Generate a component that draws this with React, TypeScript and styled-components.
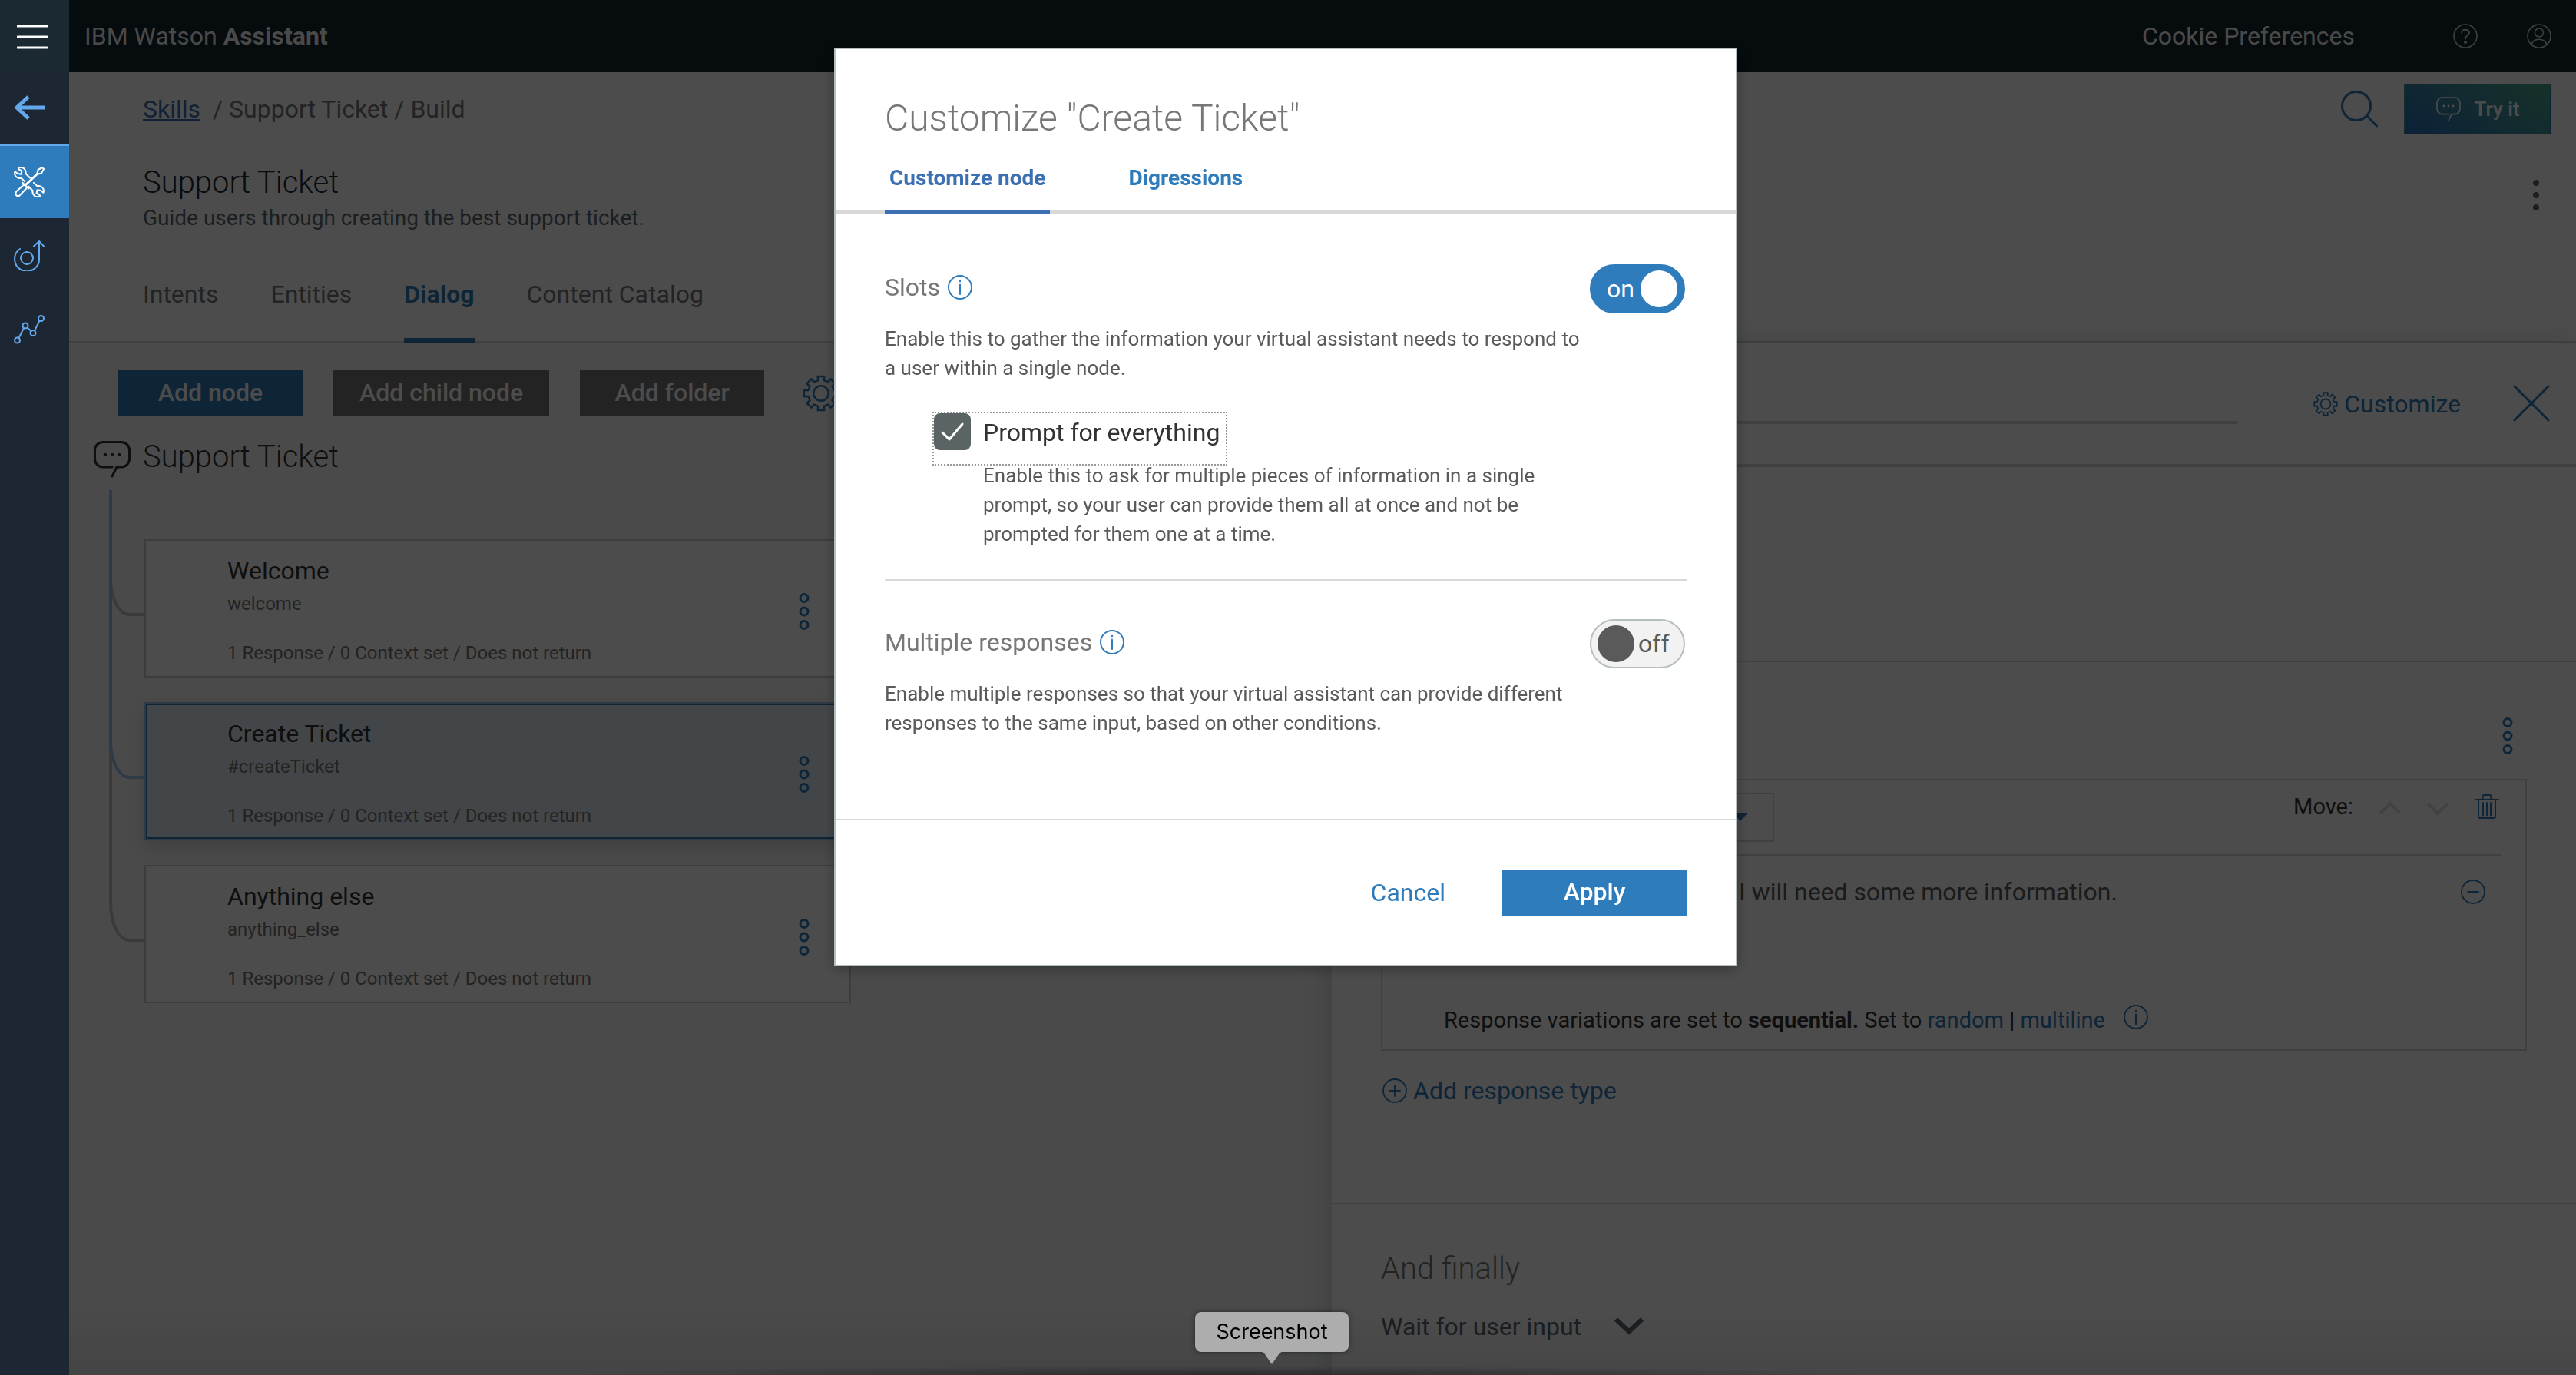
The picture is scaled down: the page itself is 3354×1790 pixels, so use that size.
import React, { useState } from 'react';
import styled, { createGlobalStyle, css } from 'styled-components';

const color = {
  blue: '#2f7cbc',
  indigo: '#3d70b2',
  line: '#d8d8d8',
  text: '#323232',
  mid: '#5a5a5a',
  soft: '#777777',
  slate: '#5a6872',
  sky: '#64a8ec',
};

const GlobalStyle = createGlobalStyle`
  *, *::before, *::after { box-sizing: border-box; }
  body {
    margin: 0;
    background: #fff;
    color: ${color.text};
    font-family: Roboto, "Liberation Sans", sans-serif;
    font-size: 32px;
    line-height: 40px;
  }
  h1, h2, h3, p, ul { margin: 0; padding: 0; font-size: inherit; font-weight: 400; }
  ul { list-style: none; }
  button, input, select { font: inherit; color: inherit; }
  svg { display: block; flex: none; }
`;

const plainButton = css`
  margin: 0;
  padding: 0;
  border: 0;
  background: none;
  cursor: pointer;
`;

/* ---------- icons ---------- */

const Svg = styled.svg<{ $w?: number; $sharp?: boolean }>`
  fill: none;
  stroke: currentColor;
  stroke-width: ${p => p.$w ?? 2};
  stroke-linecap: ${p => (p.$sharp ? 'butt' : 'round')};
  stroke-linejoin: ${p => (p.$sharp ? 'miter' : 'round')};
`;

const MenuIcon = () => (
  <Svg width="40" height="32" viewBox="0 0 40 32" $w={3}>
    <path d="M1 2H39M1 16H39M1 30H39" />
  </Svg>
);

const BackIcon = () => (
  <Svg width="40" height="32" viewBox="0 0 40 32" $w={5} $sharp>
    <path d="M3 16H40M19 2L4 16L19 30" />
  </Svg>
);

const wrenchHead = 'M6 1.4C11.5 -.4 16.500 3 15.500 9L21 14.500M6 1.400L6.500 3.500L10.500 5.500L9.500 9.800L5 9L1.500 6.200C-.2 11.500 4 16 9.500 14.800L14 19';

const ToolsIcon = () => (
  <Svg width="40" height="40" viewBox="0 0 40 40" $w={2}>
    <path d={wrenchHead} />
    <path d={wrenchHead} transform="rotate(180 20 20)" />
    <path d="M15.500 23.500L31 9" strokeWidth="3" />
    <path d="M30.500 8L31.500 4L37 1L39 3L36 8.500L32 9.500Z" />
    <path d="M11 20.500L19.500 28.500M13.500 23L3.500 32Q1.500 34.500 3 37Q5.500 39.500 8 37L17.500 27" />
  </Svg>
);

const ImproveIcon = () => (
  <Svg width="40" height="40" viewBox="0 0 40 40" $w={2}>
    <path d="M8 11A16 16 0 1 0 33 23V2M26 7.500L33 1L39 7.500" />
    <circle cx="17" cy="23" r="8" />
  </Svg>
);

const AnalyticsIcon = () => (
  <Svg width="40" height="40" viewBox="0 0 40 40" $w={2}>
    <circle cx="4.500" cy="34" r="3.500" />
    <circle cx="15" cy="15" r="3.500" />
    <circle cx="25" cy="24.500" r="3.500" />
    <circle cx="35.500" cy="5.500" r="3.500" />
    <path d="M6.500 31L13 18M17.500 17.500L22.500 22M27 21.500L33.500 8.500" />
  </Svg>
);

const HelpIcon = () => (
  <Svg width="32" height="32" viewBox="0 0 32 32" $w={1.6}>
    <circle cx="16" cy="16" r="15" />
    <path d="M11 11.500C11 6.500 21 6.500 21 11.500C21 15.500 16 14.500 16 19.500" strokeWidth="2" />
    <circle cx="16" cy="24" r="1.300" fill="currentColor" />
  </Svg>
);

const UserIcon = () => (
  <Svg width="32" height="32" viewBox="0 0 32 32" $w={1.6}>
    <circle cx="16" cy="16" r="15" />
    <circle cx="16" cy="11.500" r="5.500" />
    <path d="M6.500 27C7 18 25 18 25.500 27" />
  </Svg>
);

const SearchIcon = () => (
  <Svg width="48" height="48" viewBox="0 0 48 48" $w={3}>
    <circle cx="20" cy="20" r="18.500" />
    <path d="M34 33L46.500 46" />
  </Svg>
);

const ChatIcon = ({ size }: { size: number }) => (
  <Svg width={size} height={size} viewBox="0 0 48 48" $w={size > 40 ? 3 : 2.4}>
    <path d="M24 34H12A10.500 10.500 0 0 1 1.500 23.500V12A10.500 10.500 0 0 1 12 1.500H36A10.500 10.500 0 0 1 46.500 12V23.500A10.500 10.500 0 0 1 36 34H30L24 46" />
    <g fill="currentColor" stroke="none">
      <circle cx="15" cy="18" r="2.200" />
      <circle cx="24" cy="18" r="2.200" />
      <circle cx="33" cy="18" r="2.200" />
    </g>
  </Svg>
);

const gearOutline = (() => {
  const teeth = 8;
  const points: string[] = [];
  for (let i = 0; i < teeth; i++) {
    const a = (i * 2 * Math.PI) / teeth;
    [[11.5, -0.22], [15, -0.19], [15, 0.19], [11.5, 0.22]].forEach(([r, d]) => {
      points.push(`${(r * Math.sin(a + d)).toFixed(2)} ${(-r * Math.cos(a + d)).toFixed(2)}`);
    });
  }
  return `M${points.join('L')}Z`;
})();

const GearIcon = ({ size }: { size: number }) => (
  <Svg width={size} height={size} viewBox="-16 -16 32 32" $w={size > 40 ? 1.7 : 1.8}>
    <path d={gearOutline} />
    <circle r="6.500" />
  </Svg>
);

const CloseIcon = () => (
  <Svg width="48" height="48" viewBox="0 0 48 48" $w={3}>
    <path d="M2 2L46 46M46 2L2 46" />
  </Svg>
);

const InfoIcon = () => (
  <Svg width="32" height="32" viewBox="0 0 32 32" $w={2}>
    <circle cx="16" cy="16" r="15" />
    <path d="M16 12.500V25" />
    <circle cx="16" cy="8" r="1.200" fill="currentColor" stroke="none" />
  </Svg>
);

const PlusCircleIcon = () => (
  <Svg width="32" height="32" viewBox="0 0 32 32" $w={1.8}>
    <circle cx="16" cy="16" r="15" />
    <path d="M16 9V23M9 16H23" />
  </Svg>
);

const MinusCircleIcon = () => (
  <Svg width="32" height="32" viewBox="0 0 32 32" $w={1.8}>
    <circle cx="16" cy="16" r="15" />
    <path d="M9 16H23" />
  </Svg>
);

const ChevronIcon = ({ up }: { up?: boolean }) => (
  <Svg width="28" height="32" viewBox="0 0 28 32" $w={4} $sharp>
    <path d={up ? 'M1 25L14 12L27 25' : 'M1 12L14 25L27 12'} />
  </Svg>
);

const BigChevronIcon = () => (
  <Svg width="38" height="24" viewBox="0 0 38 24" $w={6} $sharp>
    <path d="M2 2.500L19 18.500L36 2.500" />
  </Svg>
);

const TrashIcon = () => (
  <Svg width="32" height="32" viewBox="0 0 32 32" $w={2}>
    <path d="M1 7H31M10.500 7V3Q10.500 1 12.500 1H19.500Q21.500 1 21.500 3V7M5 7V29Q5 31 7 31H25Q27 31 27 29V7M11 11V27.500M16 11V27.500M21 11V27.500" />
  </Svg>
);

const RingsIcon = () => (
  <Svg width="14" height="48" viewBox="0 0 14 48" $w={3}>
    <circle cx="7" cy="6.500" r="5" />
    <circle cx="7" cy="24" r="5" />
    <circle cx="7" cy="41.500" r="5" />
  </Svg>
);

const DotsIcon = () => (
  <svg width="40" height="40" viewBox="0 0 40 40" fill="currentColor">
    <circle cx="20" cy="4" r="4" />
    <circle cx="20" cy="20" r="4" />
    <circle cx="20" cy="36" r="4" />
  </svg>
);

/* ---------- shell ---------- */

const Page = styled.div`
  display: flex;
  min-height: 100vh;
`;

const Rail = styled.nav`
  position: relative;
  z-index: 20;
  display: flex;
  flex-direction: column;
  flex: none;
  width: 90px;
  background: #1d2733;
`;

const RailButton = styled.button<{ $kind?: 'menu' | 'back' | 'active' }>`
  ${plainButton}
  display: flex;
  align-items: center;
  height: 96px;
  padding-left: 18px;
  border-top: 2px solid transparent;
  color: ${color.sky};
  ${p => p.$kind === 'menu' && css`
    height: 94px;
    padding-left: 22px;
    background: #1b2932;
    color: #fff;
  `}
  ${p => p.$kind === 'back' && css`
    height: 94px;
    border-top: 0;
    padding-bottom: 2px;
  `}
  ${p => p.$kind === 'active' && css`
    border-top-color: ${color.sky};
    background: ${color.blue};
    color: #fff;
  `}
`;

const Main = styled.main`
  display: flex;
  flex-direction: column;
  flex: 1;
  min-width: 0;
`;

const TopBar = styled.header`
  display: flex;
  align-items: center;
  height: 94px;
  padding: 0 32px 0 20px;
  background: #14252f;
  color: #f5f5f5;
`;

const Brand = styled.p`
  flex: 1;
`;

const TopLink = styled.a`
  margin-right: 128px;
  color: inherit;
  text-decoration: none;
`;

const TopIcon = styled.button`
  ${plainButton}
  color: #d0d0d0;
  & + & { margin-left: 64px; }
`;

/* ---------- skill header ---------- */

const SkillHeader = styled.section`
  padding: 16px 32px 0 96px;
  background: #fff;
  box-shadow: inset 0 -2px ${color.line};
`;

const SkillRow = styled.div`
  display: flex;
  align-items: center;
  justify-content: space-between;
`;

const Crumbs = styled.p`
  color: ${color.soft};
  white-space: pre;
  a { color: ${color.indigo}; }
`;

const Actions = styled.div`
  display: flex;
  align-items: center;
  gap: 34px;
`;

const IconButton = styled.button<{ $tone?: string }>`
  ${plainButton}
  color: ${p => p.$tone ?? color.blue};
`;

const TryButton = styled.button`
  ${plainButton}
  display: flex;
  align-items: center;
  justify-content: center;
  gap: 18px;
  width: 192px;
  height: 64px;
  border: solid transparent;
  border-width: 0 2px;
  background: linear-gradient(35deg, #2b6cbd, #3c8ca0 50%, #4ba488);
  color: #fff;
  font-size: 26px;
  font-weight: 500;
  line-height: 32px;
`;

const TitleRow = styled.div`
  display: flex;
  align-items: flex-start;
  justify-content: space-between;
  margin-top: 40px;
  ${IconButton} { padding: 20px 0; }
`;

const SkillTitle = styled.h1`
  color: #152934;
  font-size: 40px;
  font-weight: 300;
  line-height: 48px;
`;

const SkillNote = styled.p`
  margin-top: 4px;
  color: ${color.slate};
  font-size: 28px;
  line-height: 36px;
`;

const Tabs = styled.nav`
  display: flex;
  gap: 68px;
  margin-top: 61px;
`;

const Tab = styled.a<{ $on?: boolean }>`
  padding-bottom: 37px;
  border-bottom: 6px solid ${p => (p.$on ? color.blue : 'transparent')};
  color: ${p => (p.$on ? color.blue : color.soft)};
  font-weight: ${p => (p.$on ? 700 : 400)};
  text-decoration: none;
`;

/* ---------- tree ---------- */

const Workspace = styled.div`
  display: flex;
  flex: 1;
`;

const TreePanel = styled.section`
  flex: 1;
  min-width: 0;
  padding: 36px 0 0 32px;
  background: #f7f8fa;
`;

const Toolbar = styled.div`
  display: flex;
  align-items: center;
  gap: 40px;
  margin-left: 32px;
`;

const Button = styled.button<{ $tone?: 'grey' }>`
  ${plainButton}
  min-width: 240px;
  height: 60px;
  padding: 0 34px 2px;
  background: ${p => (p.$tone ? color.soft : color.blue)};
  color: #fff;
  font-weight: 500;
`;

const GearButton = styled(IconButton)`
  margin-left: 10px;
`;

const TreeTitle = styled.h2`
  display: flex;
  align-items: flex-start;
  gap: 16px;
  margin-top: 29px;
  font-size: 40px;
  font-weight: 300;
  line-height: 48px;
  svg { margin-top: 3px; }
`;

const NodeList = styled.ul`
  display: flex;
  flex-direction: column;
  gap: 32px;
  width: 920px;
  margin: 80px 0 0 66px;
`;

const NodeItem = styled.li<{ $on?: boolean; $index: number }>`
  position: relative;
  display: flex;
  align-items: center;
  height: 180px;
  padding: 0 52px 0 106px;
  border: 2px solid ${p => (p.$on ? '#9bc4e6' : '#cccccc')};
  background: ${p => (p.$on ? '#dfecf3' : '#fff')};
  ${p => p.$on && css`
    z-index: 1;
    box-shadow: inset 0 0 0 2px ${color.blue}, 0 10px 24px rgba(0, 0, 0, 0.14);
  `}

  &::before {
    content: '';
    position: absolute;
    left: -48px;
    top: ${p => -66 - p.$index * 212}px;
    width: 46px;
    height: ${p => 164 + p.$index * 212}px;
    border: solid ${p => (p.$on ? '#9bc4e6' : '#c4c4c4')};
    border-width: 0 0 4px 4px;
    border-bottom-left-radius: 26px 50px;
  }
`;

const NodeBody = styled.div`
  flex: 1;
  padding-top: 4px;
`;

const NodeSub = styled.p`
  margin-top: 7px;
  color: ${color.soft};
  font-size: 24px;
  line-height: 32px;
`;

const NodeMeta = styled(NodeSub)`
  margin-top: 32px;
`;

const NodeMenu = styled(IconButton)`
  padding-top: 8px;
`;

/* ---------- detail panel ---------- */

const Detail = styled.section`
  flex: none;
  width: calc(50% - 12px);
  background: #fff;
  box-shadow: -8px 0 32px rgba(21, 41, 52, 0.14);
`;

const DetailHeader = styled.div`
  display: flex;
  align-items: center;
  height: 162px;
  padding: 0 34px 0 64px;
  border-bottom: 4px solid ${color.line};
`;

const NameInput = styled.input`
  flex: 1;
  height: 54px;
  margin-right: 98px;
  border: 0;
  border-bottom: 4px solid ${color.line};
  background: none;
`;

const LinkButton = styled.button`
  ${plainButton}
  display: flex;
  align-items: center;
  gap: 8px;
  color: ${color.blue};
`;

const CustomizeButton = styled(LinkButton)`
  margin-right: 68px;
  padding-top: 2px;
`;

const ConditionArea = styled.div`
  height: 254px;
  border-bottom: 2px solid ${color.line};
`;

const ResponseArea = styled.div`
  padding: 0 64px 126px;
  border-bottom: 2px solid ${color.line};
`;

const ResponseMenuRow = styled.div`
  display: flex;
  align-items: flex-end;
  justify-content: flex-end;
  height: 152px;
  padding: 0 18px 32px;
`;

const Card = styled.div`
  height: 354px;
  padding: 16px 32px 0;
  border: 2px solid ${color.line};
`;

const CardBar = styled.div`
  display: flex;
  align-items: flex-start;
  justify-content: space-between;
  padding: 0 2px 16px 0;
  border-bottom: 2px solid ${color.line};
`;

const SelectWrap = styled.div`
  display: flex;
  align-items: center;
  justify-content: flex-end;
  width: 478px;
  height: 64px;
  padding-right: 33px;
  border: 2px solid ${color.line};
  color: ${color.indigo};
  select {
    flex: 1;
    height: 60px;
    border: 0;
    background: none;
    appearance: none;
  }
`;

const MoveGroup = styled.div`
  display: flex;
  align-items: center;
  gap: 34px;
  height: 36px;
  font-size: 29px;
`;

const ReplyRow = styled.div`
  display: flex;
  align-items: center;
  margin-top: 27px;
  padding: 0 20px 0 48px;
`;

const ReplyInput = styled.input`
  flex: 1;
  height: 40px;
  padding: 0 0 0 384px;
  border: 0;
  background: none;
  color: ${color.mid};
`;

const Variations = styled.div`
  display: flex;
  align-items: flex-start;
  gap: 24px;
  margin-top: 127px;
  padding-left: 48px;
  font-size: 29px;
  a { color: ${color.blue}; text-decoration: none; }
`;

const AddResponse = styled(LinkButton)`
  margin: 32px 0 0 2px;
`;

const Finally = styled.div`
  padding: 60px 64px 40px;
`;

const FinallyTitle = styled.h3`
  color: ${color.soft};
  font-size: 40px;
  font-weight: 300;
  line-height: 48px;
`;

const WaitLabel = styled.label`
  display: flex;
  align-items: center;
  gap: 42px;
  margin-top: 31px;
  color: ${color.slate};
  select {
    height: 40px;
    padding: 0;
    border: 0;
    background: none;
    appearance: none;
  }
`;

/* ---------- modal ---------- */

const Overlay = styled.div`
  position: fixed;
  inset: 0;
  z-index: 10;
  display: flex;
  align-items: flex-start;
  justify-content: center;
  padding: 62px 6px 0 0;
  background: rgba(0, 0, 0, 0.7);
`;

const Modal = styled.div`
  width: 1176px;
  border: 2px solid #b5bfbf;
  background: #fff;
  box-shadow: 0 4px 16px rgba(0, 0, 0, 0.3);
`;

const ModalTitle = styled.h2`
  padding: 62px 64px 0;
  color: ${color.soft};
  font-size: 48px;
  font-weight: 300;
  line-height: 56px;
`;

const ModalTabs = styled.div`
  display: flex;
  gap: 96px;
  margin-top: 34px;
  padding: 0 64px;
  box-shadow: inset 0 -4px ${color.line};
`;

const ModalTab = styled.button<{ $on?: boolean }>`
  ${plainButton}
  padding: 0 6px 26px;
  border-bottom: 4px solid ${p => (p.$on ? color.indigo : 'transparent')};
  color: ${p => (p.$on ? color.indigo : color.blue)};
  font-size: 28px;
  font-weight: 700;
  line-height: 32px;
`;

const ModalBody = styled.div`
  padding: 66px 64px 106px;
`;

const Setting = styled.section`
  & + & {
    margin-top: 40px;
    padding-top: 50px;
    border-top: 2px solid ${color.line};
  }
`;

const SettingHead = styled.div`
  display: flex;
  align-items: center;
  justify-content: space-between;
  padding-right: 2px;
`;

const SettingName = styled.h3`
  display: flex;
  align-items: center;
  gap: 10px;
  padding-bottom: 4px;
  color: ${color.soft};
`;

const Note = styled.p`
  max-width: 916px;
  margin-top: 14px;
  color: ${color.mid};
  font-size: 26px;
  line-height: 38px;
`;

const hiddenInput = css`
  position: absolute;
  inset: 0;
  width: 100%;
  height: 100%;
  margin: 0;
  opacity: 0;
  cursor: pointer;
`;

const SwitchTrack = styled.label<{ $on: boolean }>`
  position: relative;
  display: flex;
  flex-direction: ${p => (p.$on ? 'row' : 'row-reverse')};
  align-items: center;
  justify-content: flex-end;
  gap: ${p => (p.$on ? 8 : 5)}px;
  width: 124px;
  height: 64px;
  padding: 0 8px;
  border: 2px solid ${p => (p.$on ? color.blue : '#b5bfbf')};
  border-radius: 32px;
  background: ${p => (p.$on ? color.blue : '#f2f2f2')};
  color: ${p => (p.$on ? '#fff' : color.mid)};
  &::after {
    content: '';
    width: 48px;
    height: 48px;
    border-radius: 50%;
    background: ${p => (p.$on ? '#fff' : color.mid)};
  }
  input { ${hiddenInput} }
`;

const CheckLabel = styled.label`
  position: relative;
  display: flex;
  align-items: flex-start;
  gap: 16px;
  width: fit-content;
  height: 70px;
  margin: 38px 0 -6px 62px;
  padding-right: 8px;
  border: 2px dotted #999;
  line-height: 50px;
  input { ${hiddenInput} }
`;

const CheckBox = styled.span<{ $on: boolean }>`
  display: flex;
  align-items: center;
  justify-content: center;
  width: 48px;
  height: 48px;
  border: 2px solid #5a6464;
  border-radius: 8px;
  background: ${p => (p.$on ? '#5a6464' : '#fff')};
  color: #fff;
`;

const Nested = styled.div`
  padding-left: 128px;
  ${Note} { margin-top: 0; max-width: 788px; }
`;

const ModalFooter = styled.div`
  display: flex;
  align-items: center;
  justify-content: flex-end;
  gap: 74px;
  padding: 64px;
  border-top: 2px solid ${color.line};
`;

/* ---------- dock tooltip ---------- */

const DockShade = styled.div`
  position: fixed;
  z-index: 15;
  left: 90px;
  right: 0;
  bottom: 0;
  height: 80px;
  background: linear-gradient(transparent, rgba(0, 0, 0, 0.07));
  pointer-events: none;
  &::after {
    content: '';
    position: absolute;
    left: 20%;
    right: 28%;
    bottom: 0;
    height: 12px;
    background: radial-gradient(ellipse 50% 100% at 50% 100%, rgba(0, 0, 0, 0.35), transparent);
  }
`;

const DockTip = styled.div`
  position: fixed;
  z-index: 30;
  bottom: 30px;
  left: calc(50% - 121px);
  width: 200px;
  height: 52px;
  border-radius: 8px;
  background: #adadae;
  box-shadow: 0 0 6px rgba(0, 0, 0, 0.5);
  color: #000;
  font-family: Inter, "Liberation Sans", sans-serif;
  font-size: 27px;
  line-height: 52px;
  text-align: center;
  svg {
    position: absolute;
    top: 51px;
    left: 82px;
  }
`;

const nodes = [
  { title: 'Welcome', condition: 'welcome' },
  { title: 'Create Ticket', condition: '#createTicket', selected: true },
  { title: 'Anything else', condition: 'anything_else' },
];

function Switch({ name, initial }: { name: string; initial: boolean }) {
  const [on, setOn] = useState(initial);
  return (
    <SwitchTrack $on={on}>
      <input type="checkbox" role="switch" aria-label={name} checked={on} onChange={() => setOn(!on)} />
      {on ? 'on' : 'off'}
    </SwitchTrack>
  );
}

function CustomizeModal() {
  const [prompt, setPrompt] = useState(true);
  return (
    <Overlay>
      <Modal role="dialog" aria-modal="true" aria-labelledby="modal-title">
        <ModalTitle id="modal-title">Customize "Create Ticket"</ModalTitle>
        <ModalTabs role="tablist">
          <ModalTab role="tab" aria-selected="true" $on>Customize node</ModalTab>
          <ModalTab role="tab" aria-selected="false">Digressions</ModalTab>
        </ModalTabs>
        <ModalBody>
          <Setting>
            <SettingHead>
              <SettingName>Slots<IconButton aria-label="About slots"><InfoIcon /></IconButton></SettingName>
              <Switch name="Slots" initial />
            </SettingHead>
            <Note>Enable this to gather the information your virtual assistant needs to respond to a user within a single node.</Note>
            <CheckLabel>
              <input type="checkbox" checked={prompt} onChange={() => setPrompt(!prompt)} />
              <CheckBox $on={prompt}>
                <Svg width="32" height="26" viewBox="0 0 32 26" $w={3}>
                  <path d="M3 14L12 23L29 3" />
                </Svg>
              </CheckBox>
              Prompt for everything
            </CheckLabel>
            <Nested>
              <Note>Enable this to ask for multiple pieces of information in a single prompt, so your user can provide them all at once and not be prompted for them one at a time.</Note>
            </Nested>
          </Setting>
          <Setting>
            <SettingHead>
              <SettingName>Multiple responses<IconButton aria-label="About multiple responses"><InfoIcon /></IconButton></SettingName>
              <Switch name="Multiple responses" initial={false} />
            </SettingHead>
            <Note>Enable multiple responses so that your virtual assistant can provide different responses to the same input, based on other conditions.</Note>
          </Setting>
        </ModalBody>
        <ModalFooter>
          <LinkButton>Cancel</LinkButton>
          <Button>Apply</Button>
        </ModalFooter>
      </Modal>
    </Overlay>
  );
}

export default function App() {
  return (
    <>
      <GlobalStyle />
      <Page>
        <Rail>
          <RailButton $kind="menu" aria-label="Menu"><MenuIcon /></RailButton>
          <RailButton $kind="back" aria-label="Back"><BackIcon /></RailButton>
          <RailButton $kind="active" aria-label="Build"><ToolsIcon /></RailButton>
          <RailButton aria-label="Improve"><ImproveIcon /></RailButton>
          <RailButton aria-label="Analytics"><AnalyticsIcon /></RailButton>
        </Rail>
        <Main>
          <TopBar>
            <Brand>IBM Watson <b>Assistant</b></Brand>
            <TopLink href="#cookies">Cookie Preferences</TopLink>
            <TopIcon aria-label="Help"><HelpIcon /></TopIcon>
            <TopIcon aria-label="Account"><UserIcon /></TopIcon>
          </TopBar>

          <SkillHeader>
            <SkillRow>
              <Crumbs><a href="#skills">Skills</a>{'  / Support Ticket / Build'}</Crumbs>
              <Actions>
                <IconButton aria-label="Search"><SearchIcon /></IconButton>
                <TryButton><ChatIcon size={32} />Try it</TryButton>
              </Actions>
            </SkillRow>
            <TitleRow>
              <div>
                <SkillTitle>Support Ticket</SkillTitle>
                <SkillNote>Guide users through creating the best support ticket.</SkillNote>
              </div>
              <IconButton $tone={color.slate} aria-label="Skill options"><DotsIcon /></IconButton>
            </TitleRow>
            <Tabs>
              <Tab href="#intents">Intents</Tab>
              <Tab href="#entities">Entities</Tab>
              <Tab href="#dialog" $on>Dialog</Tab>
              <Tab href="#catalog">Content Catalog</Tab>
            </Tabs>
          </SkillHeader>

          <Workspace>
            <TreePanel>
              <Toolbar>
                <Button>Add node</Button>
                <Button $tone="grey">Add child node</Button>
                <Button $tone="grey">Add folder</Button>
                <GearButton aria-label="Settings"><GearIcon size={48} /></GearButton>
              </Toolbar>
              <TreeTitle><ChatIcon size={48} />Support Ticket</TreeTitle>
              <NodeList>
                {nodes.map((node, i) => (
                  <NodeItem key={node.title} $index={i} $on={node.selected}>
                    <NodeBody>
                      <h3>{node.title}</h3>
                      <NodeSub>{node.condition}</NodeSub>
                      <NodeMeta>1 Response / 0 Context set / Does not return</NodeMeta>
                    </NodeBody>
                    <NodeMenu aria-label={`${node.title} options`}><RingsIcon /></NodeMenu>
                  </NodeItem>
                ))}
              </NodeList>
            </TreePanel>

            <Detail>
              <DetailHeader>
                <NameInput aria-label="Node name" />
                <CustomizeButton><GearIcon size={32} />Customize</CustomizeButton>
                <IconButton aria-label="Close"><CloseIcon /></IconButton>
              </DetailHeader>
              <ConditionArea />
              <ResponseArea>
                <ResponseMenuRow>
                  <IconButton aria-label="Response options"><RingsIcon /></IconButton>
                </ResponseMenuRow>
                <Card>
                  <CardBar>
                    <SelectWrap>
                      <select aria-label="Response type" />
                      <svg width="18" height="10" viewBox="0 0 18 10" fill="currentColor"><path d="M0 0H18L9 10Z" /></svg>
                    </SelectWrap>
                    <MoveGroup>
                      Move:
                      <IconButton $tone="#dddddd" aria-label="Move up"><ChevronIcon up /></IconButton>
                      <IconButton $tone="#dddddd" aria-label="Move down"><ChevronIcon /></IconButton>
                      <IconButton aria-label="Delete"><TrashIcon /></IconButton>
                    </MoveGroup>
                  </CardBar>
                  <ReplyRow>
                    <ReplyInput aria-label="Response text" defaultValue="I will need some more information." />
                    <IconButton aria-label="Remove"><MinusCircleIcon /></IconButton>
                  </ReplyRow>
                  <Variations>
                    <p>
                      Response variations are set to <b>sequential.</b> Set to <a href="#random">random</a> | <a href="#multiline">multiline</a>
                    </p>
                    <IconButton aria-label="About variations"><InfoIcon /></IconButton>
                  </Variations>
                </Card>
                <AddResponse><PlusCircleIcon />Add response type</AddResponse>
              </ResponseArea>
              <Finally>
                <FinallyTitle>And finally</FinallyTitle>
                <WaitLabel>
                  <select aria-label="And finally"><option>Wait for user input</option></select>
                  <BigChevronIcon />
                </WaitLabel>
              </Finally>
            </Detail>
          </Workspace>
        </Main>
      </Page>
      <CustomizeModal />
      <DockShade />
      <DockTip>
        Screenshot
        <svg width="36" height="17" viewBox="0 0 36 17" fill="#adadae"><path d="M0 0H36Q30 0 27 4L18 17L9 4Q6 0 0 0Z" /></svg>
      </DockTip>
    </>
  );
}
